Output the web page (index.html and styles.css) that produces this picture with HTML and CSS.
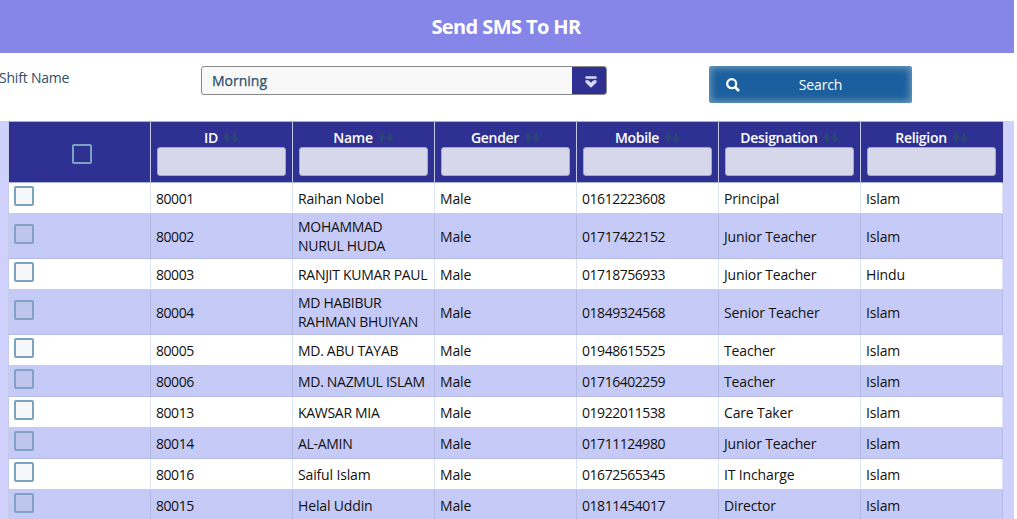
FILE: index.html
```html
<!DOCTYPE html>
<html lang="en">
<head>
<meta charset="utf-8">
<title>Send SMS To HR</title>
<link rel="stylesheet" href="styles.css">
</head>
<body>
<svg class="defs" width="0" height="0"><symbol id="sort" viewBox="0 0 16 12"><path d="M4 1L8 6H5.200V10.500H2.800V6H0ZM12 10.500L16 5.500H13.200V1H10.800V5.500H8Z" fill="currentColor"/></symbol></svg>
<div class="page">
<header class="title">Send SMS To HR</header>
<section class="filters">
<label class="label">Shift Name</label>
<div class="select"><span class="value">Morning</span><span class="trigger"><svg width="12" height="12" viewBox="0 0 12 12"><path d="M1.5 1.5H10.5" stroke="#d4dcfa" stroke-width="2.400" stroke-linecap="round"/><path d="M.5 4.200H3.400L6 6.800L8.600 4.200H11.500V6.400L6 11.700L.5 6.400Z" fill="#d4dcfa"/></svg></span></div>
<button class="search"><svg width="14" height="14" viewBox="0 0 14 14"><circle cx="5.700" cy="5.700" r="4.500" fill="none" stroke="#fff" stroke-width="2.200"/><path d="M9 9L13 13" stroke="#fff" stroke-width="2.600"/></svg><span>Search</span></button>
</section>
<main class="panel">
<table class="grid">
<thead><tr>
<th><span class="check"></span></th>
<th><div class="head">ID<svg class="sort"><use href="#sort"/></svg></div><input class="filter"></th>
<th><div class="head">Name<svg class="sort"><use href="#sort"/></svg></div><input class="filter"></th>
<th><div class="head">Gender<svg class="sort"><use href="#sort"/></svg></div><input class="filter"></th>
<th><div class="head">Mobile<svg class="sort"><use href="#sort"/></svg></div><input class="filter"></th>
<th><div class="head">Designation<svg class="sort"><use href="#sort"/></svg></div><input class="filter"></th>
<th><div class="head">Religion<svg class="sort"><use href="#sort"/></svg></div><input class="filter"></th>
</tr></thead>
<tbody>
<tr><td><span class="check"></span></td><td class="num">80001</td><td>Raihan Nobel</td><td>Male</td><td class="num">01612223608</td><td>Principal</td><td>Islam</td></tr>
<tr class="tall"><td><span class="check"></span></td><td class="num">80002</td><td class="caps">MOHAMMAD<br>NURUL HUDA</td><td>Male</td><td class="num">01717422152</td><td>Junior Teacher</td><td>Islam</td></tr>
<tr><td><span class="check"></span></td><td class="num">80003</td><td class="caps">RANJIT KUMAR PAUL</td><td>Male</td><td class="num">01718756933</td><td>Junior Teacher</td><td>Hindu</td></tr>
<tr class="tall"><td><span class="check"></span></td><td class="num">80004</td><td class="caps">MD HABIBUR<br>RAHMAN BHUIYAN</td><td>Male</td><td class="num">01849324568</td><td>Senior Teacher</td><td>Islam</td></tr>
<tr><td><span class="check"></span></td><td class="num">80005</td><td class="caps">MD. ABU TAYAB</td><td>Male</td><td class="num">01948615525</td><td>Teacher</td><td>Islam</td></tr>
<tr><td><span class="check"></span></td><td class="num">80006</td><td class="caps">MD. NAZMUL ISLAM</td><td>Male</td><td class="num">01716402259</td><td>Teacher</td><td>Islam</td></tr>
<tr><td><span class="check"></span></td><td class="num">80013</td><td class="caps">KAWSAR MIA</td><td>Male</td><td class="num">01922011538</td><td>Care Taker</td><td>Islam</td></tr>
<tr><td><span class="check"></span></td><td class="num">80014</td><td class="caps">AL-AMIN</td><td>Male</td><td class="num">01711124980</td><td>Junior Teacher</td><td>Islam</td></tr>
<tr><td><span class="check"></span></td><td class="num">80016</td><td>Saiful Islam</td><td>Male</td><td class="num">01672565345</td><td>IT Incharge</td><td>Islam</td></tr>
<tr><td><span class="check"></span></td><td class="num">80015</td><td>Helal Uddin</td><td>Male</td><td class="num">01811454017</td><td>Director</td><td>Islam</td></tr>
</tbody>
</table>
</main>
</div>
</body>
</html>
```
FILE: styles.css
```css
* { box-sizing: border-box; }
body { margin: 0; background: #fff; font: 14px/19px "Open Sans", sans-serif; color: #111; }
.defs { display: none; }
.page { width: 1014px; height: 519px; overflow: hidden; }
.title { height: 53px; background: #8586e8; color: #fff; font-size: 20px; font-weight: 700; line-height: 54px; letter-spacing: -.6px; text-align: center; padding-right: 2px; }
.filters { height: 68px; display: flex; align-items: flex-start; padding-top: 13px; color: #2f4f68; }
.label { width: 201px; margin-top: 2px; text-indent: -1px; letter-spacing: -.2px; }
.select { width: 406px; height: 29px; display: flex; border: 1px solid #88888c; border-radius: 3px; background: #f8f8f8; overflow: hidden; }
.value { flex: 1; padding-left: 10px; line-height: 28px; font-weight: 500; color: #29506d; -webkit-text-stroke: .25px #29506d; }
.trigger { width: 34px; background: #2e3192; display: flex; align-items: center; justify-content: center; padding: 2px 0 0 3px; }
.search { width: 203px; height: 37px; margin-left: 102px; padding: 0 0 0 17px; border: 0; border-radius: 3px; background: #1c5f9e; box-shadow: inset 0 0 7px 2px #6f9dbd; color: #fff; font: 14px "Open Sans", sans-serif; display: flex; align-items: center; }
.search span { flex: 1; text-align: center; padding-right: 11px; letter-spacing: -.15px; }
.panel { padding: 0 11px 0 8px; background: #cfd1fc; }
.grid { width: 995px; table-layout: fixed; border-collapse: separate; border-spacing: 0; border-left: 1px solid #c5cce8; border-top: 1px solid #a9add8; }
.grid th { height: 61px; padding: 6px 6px 0; background: #2e3192; border-right: 1px solid #c3c7e6; border-bottom: 1px solid #a9b4d8; color: #fff; font-weight: 600; vertical-align: top; }
.grid th:first-child { padding: 0 0 0 5px; vertical-align: middle; }
.grid th:last-child { border-right-color: #2e3192; }
.head { display: flex; align-items: center; justify-content: center; height: 19px; letter-spacing: -.3px; }
.sort { width: 16px; height: 12px; margin-left: 5px; color: #28486f; }
.filter { display: block; width: 129px; height: 29px; border: 1px solid #a7a8b8; border-radius: 3px; background: #d6d7eb; }
.grid td { height: 31px; padding: 1px 5px 0; letter-spacing: -.15px; border-right: 1px solid #dce4f2; border-bottom: 1px solid #c4caef; background: #fff; white-space: nowrap; }
.grid td.num { letter-spacing: -.46px; }
.grid td.caps { letter-spacing: -.3px; }
.grid tr.tall td { height: 45px; padding-top: 0; }
.grid tbody tr:nth-child(even) td { background: #c6caf6; border-color: #b4bae4; }
.check { display: block; width: 20px; height: 20px; border: 2px solid #7ba3bf; border-radius: 2px; background: #f5f7f9; }
.grid td .check { margin-top: -6px; }
.grid tr.tall td .check { margin-top: -5px; }
th .check { margin: 4px auto 0; background: none; }
.grid tbody tr:nth-child(even) .check { background: #bfc6ee; border-color: #81a2c5; }
```
